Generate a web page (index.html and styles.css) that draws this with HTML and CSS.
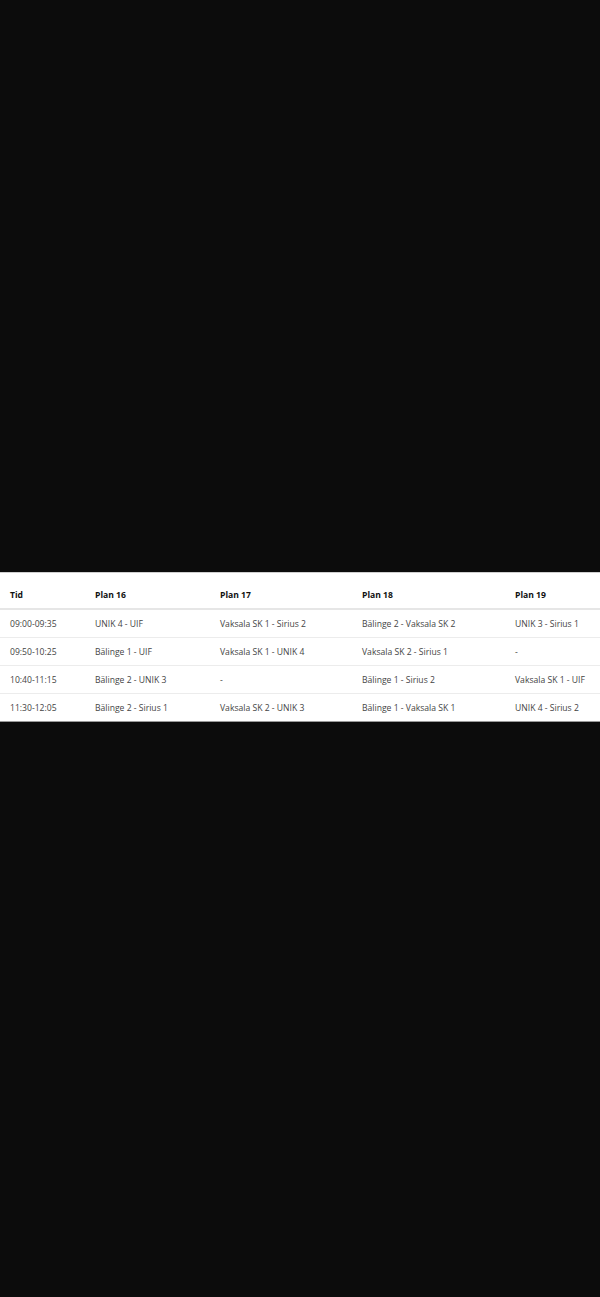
FILE: index.html
```html
<!DOCTYPE html>
<html lang="sv">
<head>
<meta charset="utf-8">
<link rel="stylesheet" href="styles.css">
<title>Schema</title>
</head>
<body>
<main class="page">
  <section class="sheet">
    <table class="schedule">
      <colgroup>
        <col class="c-tid"><col class="c-16"><col class="c-17"><col class="c-18"><col class="c-19">
      </colgroup>
      <thead>
        <tr><th>Tid</th><th>Plan 16</th><th>Plan 17</th><th>Plan 18</th><th>Plan 19</th></tr>
      </thead>
      <tbody>
        <tr><td>09:00-09:35</td><td>UNIK 4 - UIF</td><td>Vaksala SK 1 - Sirius 2</td><td>Bälinge 2 - Vaksala SK 2</td><td>UNIK 3 - Sirius 1</td></tr>
        <tr><td>09:50-10:25</td><td>Bälinge 1 - UIF</td><td>Vaksala SK 1 - UNIK 4</td><td>Vaksala SK 2 - Sirius 1</td><td>-</td></tr>
        <tr><td>10:40-11:15</td><td>Bälinge 2 - UNIK 3</td><td>-</td><td>Bälinge 1 - Sirius 2</td><td>Vaksala SK 1 - UIF</td></tr>
        <tr><td>11:30-12:05</td><td>Bälinge 2 - Sirius 1</td><td>Vaksala SK 2 - UNIK 3</td><td>Bälinge 1 - Vaksala SK 1</td><td>UNIK 4 - Sirius 2</td></tr>
      </tbody>
    </table>
  </section>
</main>
</body>
</html>
```

FILE: styles.css
```css
html, body {
  margin: 0;
  padding: 0;
  background: #0c0c0c;
}
.page {
  min-height: 1297px;
  padding-top: 572px;
  box-sizing: border-box;
}
.sheet {
  background: #ffffff;
  border-top: 1px solid #cfcfcf;
  border-bottom: 1px solid #9a9a9a;
  overflow: hidden;
}
.schedule {
  width: 600px;
  border-collapse: collapse;
  table-layout: fixed;
  font-family: "Open Sans", "Noto Sans", sans-serif;
  font-size: 8.6px;
}
.c-tid { width: 85px; }
.c-16 { width: 125px; }
.c-17 { width: 142px; }
.c-18 { width: 153px; }
.c-19 { width: 95px; }
.schedule th {
  text-align: left;
  font-weight: 700;
  color: #111;
  height: 36px;
  line-height: 12px;
  padding: 0 0 7px 10px;
  vertical-align: bottom;
  box-sizing: border-box;
  border-bottom: 2px solid #e6e6e6;
  white-space: nowrap;
}
.schedule td {
  height: 27px;
  line-height: 12px;
  padding: 0 0 0 10px;
  color: #444;
  border-bottom: 1px solid #ececec;
  white-space: nowrap;
}
.schedule tbody tr:last-child td {
  border-bottom: none;
}
```
